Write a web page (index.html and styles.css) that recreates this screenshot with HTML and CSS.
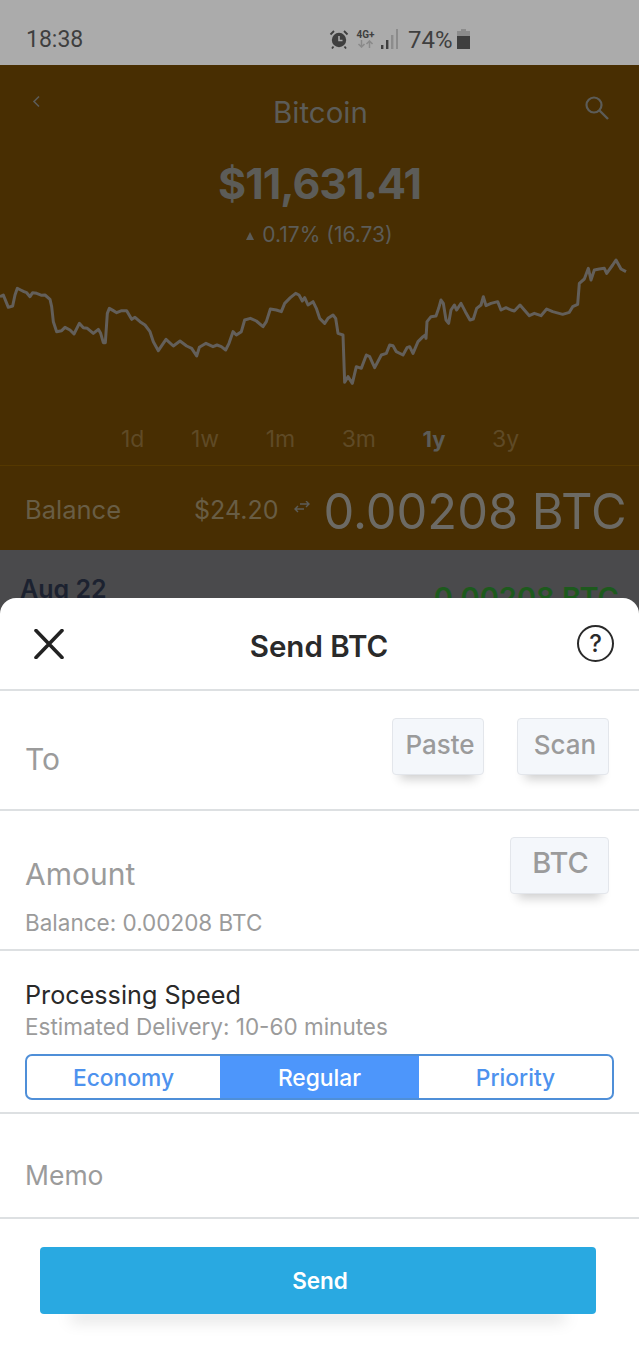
FILE: index.html
```html
<!DOCTYPE html>
<html lang="en">
<head>
  <meta charset="UTF-8">
  <meta name="viewport" content="width=device-width, initial-scale=1.0">
  <title>Send BTC</title>
  <link rel="stylesheet" href="styles.css">
</head>

<body>
  <div class="page">
    <!-- Status bar -->
    <div class="status-bar">
      <span class="clock">18:38</span>
      <div class="status-icons">
        <svg class="alarm" width="20" height="20" viewBox="0 0 20 20">
          <circle cx="10" cy="11" r="7.2" fill="#3f3f3f"/>
          <path d="M10 7v4.5h3.5" fill="none" stroke="#ababab" stroke-width="1.6"/>
          <path d="M1.5 5.5 5 2M18.5 5.5 15 2M4.5 17.5l-1.5 2M15.5 17.5l1.5 2" fill="none" stroke="#3f3f3f" stroke-width="1.8"/>
        </svg>
        <div class="net">
          <span class="net-label">4G+</span>
          <svg width="17" height="8" viewBox="0 0 17 8">
            <path d="M4.500 0v7M1.500 4l3 3 3-3" fill="none" stroke="#8a8a8a" stroke-width="1.500"/>
            <path d="M12.500 8V1M9.500 4l3-3 3 3" fill="none" stroke="#8a8a8a" stroke-width="1.500"/>
          </svg>
        </div>
        <svg class="signal" width="17" height="20" viewBox="0 0 17 20">
          <rect x="0" y="16" width="2.400" height="4" fill="#3f3f3f"/>
          <rect x="5" y="11" width="2.400" height="9" fill="#3f3f3f"/>
          <rect x="10" y="6" width="2.400" height="14" fill="#8c8c8c"/>
          <rect x="15" y="0" width="2" height="20" fill="#8c8c8c"/>
        </svg>
        <span class="battery-text">74%</span>
        <svg class="battery" width="13" height="20" viewBox="0 0 13 20">
          <rect x="4" y="0" width="5" height="3" fill="#8c8c8c"/>
          <rect x="0" y="2" width="13" height="5" fill="#8c8c8c"/>
          <rect x="0" y="7" width="13" height="13" fill="#3f3f3f"/>
        </svg>
      </div>
    </div>

    <!-- Dimmed coin screen behind the sheet -->
    <div class="coin-panel">
      <div class="coin-nav">
        <svg class="back" width="10" height="13" viewBox="0 0 10 13">
          <path d="M8 1.500 3 6.500l5 5" fill="none" stroke="#5c5c58" stroke-width="1.600"/>
        </svg>
        <span class="coin-name">Bitcoin</span>
        <svg class="search" width="26" height="25" viewBox="0 0 26 25">
          <circle cx="10" cy="10" r="7.500" fill="none" stroke="#5c5c58" stroke-width="2.200"/>
          <path d="M15.500 15.500 24 24" fill="none" stroke="#5c5c58" stroke-width="2.400"/>
        </svg>
      </div>
      <div class="price">$11,631.41</div>
      <div class="change"><span class="tri"></span>0.17% (16.73)</div>
      <svg class="chart" width="639" height="130" viewBox="0 0 1917 390">
        <polyline fill="none" stroke="#635f5a" stroke-width="9" stroke-linejoin="round" points="0,116 10,111 18,131 25,148 38,144 45,111 52,91 62,96 72,101 80,104 90,116 98,104 110,106 125,112 135,111 150,124 155,146 160,191 170,221 185,218 195,208 210,216 222,228 238,196 250,209 262,211 280,226 295,214 302,226 310,254 316,254 322,166 328,151 340,158 350,164 365,158 380,158 395,184 405,178 420,191 435,201 450,221 460,251 475,278 498,244 520,264 540,249 560,264 575,271 590,294 598,268 618,256 639,266 651,261 664,266 677,276 687,256 699,221 709,231 724,221 734,186 751,181 769,189 789,206 799,191 811,153 829,156 844,161 854,136 871,119 887,106 897,111 907,129 914,119 924,141 939,131 949,151 959,181 974,196 984,181 999,171 1007,181 1014,226 1029,231 1034,373 1044,356 1057,376 1069,326 1084,331 1099,291 1109,296 1124,329 1144,291 1159,286 1169,261 1179,263 1189,281 1209,291 1221,269 1229,266 1239,286 1254,251 1269,236 1276,231 1278,241 1281,191 1293,176 1308,174 1316,151 1323,126 1330,136 1338,186 1346,196 1353,156 1363,141 1370,156 1383,136 1396,161 1410,186 1420,183 1430,151 1443,141 1450,116 1458,143 1473,136 1493,131 1503,156 1518,149 1533,156 1543,159 1560,141 1573,156 1588,173 1603,166 1623,173 1640,153 1658,161 1688,169 1708,163 1718,146 1733,139 1738,76 1753,63 1765,31 1773,66 1783,36 1798,33 1813,31 1820,46 1838,21 1848,6 1863,33 1878,41"/>
      </svg>
      <div class="ranges">
        <span>1d</span>
        <span>1w</span>
        <span>1m</span>
        <span>3m</span>
        <span class="range-on">1y</span>
        <span>3y</span>
      </div>
      <div class="balance-row">
        <span class="balance-label">Balance</span>
        <span class="balance-usd">$24.20</span>
        <svg class="swap" width="16" height="12" viewBox="0 0 16 12">
          <path d="M1 8h9M4 5 1 8l3 3M15 3H6M12 0l3 3-3 3" fill="none" stroke="#5c5c58" stroke-width="1.400"/>
        </svg>
        <span class="balance-btc">0.00208 BTC</span>
      </div>
    </div>

    <div class="activity">
      <span class="activity-date">Aug 22</span>
      <span class="activity-amount">0.00208 BTC</span>
    </div>

    <!-- Send sheet -->
    <div class="sheet">
      <div class="sheet-head">
        <svg class="close" width="30" height="30" viewBox="0 0 30 30">
          <path d="M2 1.500 28 28.500M28 1.500 2 28.500" fill="none" stroke="#222" stroke-width="3.600" stroke-linecap="round"/>
        </svg>
        <span class="sheet-title">Send BTC</span>
        <div class="help">?</div>
      </div>

      <div class="row row-to">
        <span class="field-label">To</span>
        <div class="row-buttons">
          <button class="chip chip-paste">Paste</button>
          <button class="chip chip-scan">Scan</button>
        </div>
      </div>

      <div class="row row-amount">
        <div>
          <div class="field-label">Amount</div>
          <div class="hint hint-balance">Balance: 0.00208 BTC</div>
        </div>
        <button class="chip chip-btc">BTC</button>
      </div>

      <div class="row-speed">
        <div class="speed-title">Processing Speed</div>
        <div class="hint hint-speed">Estimated Delivery: 10-60 minutes</div>
        <div class="segments">
          <div class="segment seg-economy">Economy</div>
          <div class="segment seg-regular">Regular</div>
          <div class="segment seg-priority">Priority</div>
        </div>
      </div>

      <div class="row-memo">Memo</div>

      <div class="send-wrap">
        <button class="send">Send</button>
      </div>
    </div>
  </div>
</body>
</html>
```

FILE: styles.css
```css
* {
  box-sizing: border-box;
}

body {
  margin: 0;
  background-color: #ffffff;
  font-family: Inter, "Liberation Sans", sans-serif;
}

.page {
  position: relative;
  width: 639px;
  height: 1350px;
  overflow: hidden;
}

/* Status bar */
.status-bar {
  height: 65px;
  background-color: #ababab;
  color: #3f3f3f;
  font-family: Roboto, sans-serif;
  padding: 26px 0 0 26px;
  display: flex;
}

.clock {
  font-size: 23px;
  line-height: 28px;
  width: 304px;
}

.status-icons {
  display: flex;
  align-items: flex-start;
  padding-top: 3px;
}

.alarm {
  margin-left: -1px;
}

.net {
  width: 19px;
  margin-left: 7px;
  display: flex;
  flex-direction: column;
  align-items: center;
}

.net-label {
  font-size: 10px;
  font-weight: 700;
  line-height: 11px;
}

.signal {
  margin-left: 6px;
}

.battery-text {
  font-size: 24px;
  line-height: 22px;
  margin-left: 10px;
  width: 49px;
}

/* Coin screen */
.coin-panel {
  height: 485px;
  background-color: #482e02;
  color: #5c5c58;
}

.coin-nav {
  height: 90px;
  display: flex;
  padding: 30px 19px 0 31px;
}

.back {
  margin-right: 232px;
}

.coin-name {
  font-size: 29.5px;
  line-height: 34px;
  width: 94px;
  text-align: center;
  white-space: nowrap;
}

.search {
  margin-left: 217px;
}

.price {
  height: 56px;
  font-size: 43px;
  letter-spacing: -1px;
  line-height: 56px;
  font-weight: 700;
  text-align: center;
}

.change {
  height: 38px;
  font-size: 21px;
  line-height: 47px;
  text-align: center;
}

.tri {
  display: inline-block;
  border-left: 4px solid transparent;
  border-right: 4px solid transparent;
  border-bottom: 8px solid #5c5c58;
  margin-right: 8px;
  vertical-align: 2px;
}

.chart {
  display: block;
  margin-top: 9px;
}

.ranges {
  height: 77px;
  display: flex;
  gap: 46.5px;
  padding: 38px 0 0 121px;
  font-size: 23px;
  line-height: 26px;
  color: #5f4a26;
}

.range-on {
  color: #5c5c58;
  font-size: 22px;
  font-weight: 700;
}

.balance-row {
  height: 84px;
  border-top: 1px solid #553800;
  display: flex;
  align-items: center;
  padding-left: 25px;
}

.balance-label {
  width: 169px;
  font-size: 25.5px;
  margin-top: 4px;
  color: #685d45;
}

.balance-usd {
  font-size: 25px;
  margin-top: 4px;
  color: #685d45;
}

.swap {
  margin: 0 13px 2px 16px;
}

.balance-btc {
  font-size: 48.8px;
  margin-top: 8px;
  color: #6c6a64;
  white-space: nowrap;
}

/* Row visible between panel and sheet */
.activity {
  height: 100px;
  background-color: #4a4a4c;
  display: flex;
  justify-content: space-between;
  padding: 24px 20px 0;
  font-size: 25px;
  font-weight: 600;
}

.activity-date {
  color: #1c2230;
}

.activity-amount {
  color: #1d5a1d;
  font-size: 29px;
  margin-top: 6px;
}

/* Bottom sheet */
.sheet {
  position: absolute;
  left: 0;
  right: 0;
  top: 598px;
  bottom: 0;
  background-color: #ffffff;
  border-radius: 16px 16px 0 0;
}

.sheet-head {
  height: 93px;
  border-bottom: 2px solid #dde0e2;
  display: flex;
  align-items: center;
  justify-content: space-between;
  padding: 0 25px 0 34px;
}

.sheet-title {
  font-size: 29.5px;
  font-weight: 600;
  color: #2a2a2a;
  margin: 4px 3px 0 0;
}

.help {
  width: 37px;
  height: 37px;
  border: 2px solid #2a2a2a;
  border-radius: 50%;
  text-align: center;
  font-size: 24px;
  line-height: 33px;
  font-weight: 500;
  color: #2a2a2a;
}

.row {
  display: flex;
  justify-content: space-between;
  padding-left: 25px;
  padding-right: 30px;
  border-bottom: 2px solid #dde0e2;
}

.row-to {
  height: 120px;
  align-items: flex-start;
}

.row-to .field-label {
  margin-top: 50px;
}

.row-buttons {
  display: flex;
  gap: 33px;
  margin-top: 27px;
}

.row-amount {
  height: 140px;
}

.row-amount .field-label {
  margin-top: 45px;
}

.field-label {
  font-size: 30px;
  line-height: 36px;
  color: #9b9b9b;
}

.hint {
  font-size: 22.5px;
  line-height: 28px;
  color: #9b9b9b;
}

.hint-balance {
  margin-top: 17px;
}

.hint-speed {
  margin-top: 2px;
}

.chip {
  height: 57px;
  background-color: #f4f7fb;
  border: 1px solid #e3e6eb;
  border-radius: 4px;
  box-shadow: 0 12px 10px -8px rgba(0, 0, 0, 0.2);
  font-family: inherit;
  font-size: 26px;
  font-weight: 500;
  color: #9b9b9b;
  padding: 0 0 4px;
}

.chip-paste {
  width: 92px;
  padding-left: 4px;
}

.chip-scan {
  width: 92px;
  padding-left: 4px;
}

.chip-btc {
  width: 99px;
  margin-top: 26px;
  font-size: 29px;
  padding-bottom: 6px;
  padding-left: 2px;
}

.row-speed {
  height: 163px;
  padding: 28px 25px 0;
  border-bottom: 2px solid #dde0e2;
}

.speed-title {
  font-size: 25.2px;
  line-height: 32px;
  color: #2a2a2a;
}

.segments {
  display: flex;
  height: 46px;
  width: 589px;
  margin-top: 13px;
  border: 2px solid #4f8fd8;
  border-radius: 7px;
  overflow: hidden;
}

.segment {
  font-size: 22.8px;
  line-height: 44px;
  font-weight: 500;
  text-align: center;
  color: #4d92ee;
}

.seg-economy {
  width: 193px;
}

.seg-regular {
  width: 199px;
  background-color: #4d96fb;
  color: #ffffff;
}

.seg-priority {
  width: 193px;
}

.row-memo {
  height: 105px;
  padding: 43px 25px 0;
  border-bottom: 2px solid #dde0e2;
  font-size: 26.5px;
  line-height: 36px;
  color: #9b9b9b;
}

.send-wrap {
  padding: 28px 43px 0 40px;
}

.send {
  display: block;
  width: 556px;
  height: 67px;
  padding: 0 0 0 4px;
  background-color: #29a9e1;
  border: none;
  border-radius: 4px;
  box-shadow: 0 36px 16px -31px rgba(0, 0, 0, 0.26);
  font-family: inherit;
  font-size: 22.5px;
  font-weight: 600;
  color: #ffffff;
}
```
